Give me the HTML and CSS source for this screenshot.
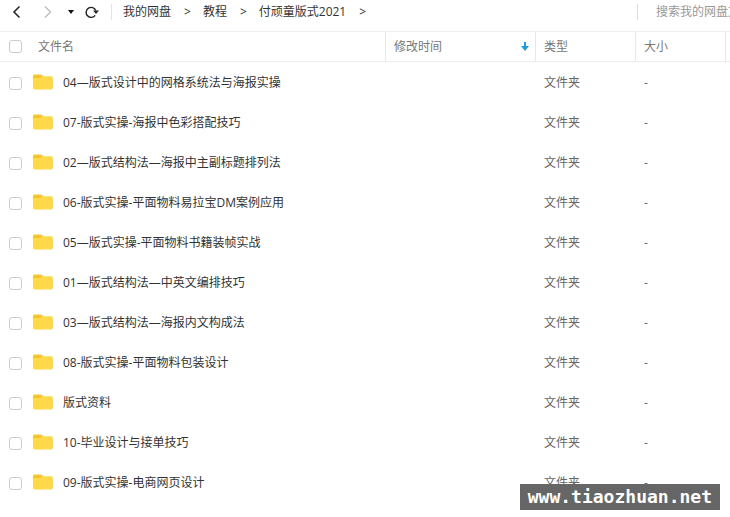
FILE: index.html
```html
<!DOCTYPE html>
<html lang="zh-CN">

<head>
    <meta charset="UTF-8">
    <meta name="viewport" content="width=device-width, initial-scale=1.0">
    <title>我的网盘</title>
    <link rel="stylesheet" href="styles.css">
</head>

<body>
    <svg class="symbols" aria-hidden="true">
        <symbol id="folder" viewBox="0 0 20 16">
            <path fill="#f2c530" d="M0 2.500C0 1.200.8.5 2 .5h5.500c1 0 1.500.3 2 1L11.500 4v4H0z" />
            <path fill="#ffd94a" d="M0 5.500C0 4.300.6 4 1.500 4H6c1.500 0 2-.4 3-1.200.6-.4 1-.5 1.600-.5H18c1.300 0 2 .7 2 2v9.200c0 1.300-.7 2-2 2H2c-1.300 0-2-.7-2-2z" />
        </symbol>
    </svg>
    <header class="toolbar">
        <div class="nav-buttons">
            <button type="button" class="back" aria-label="后退">
                <svg width="8" height="12" viewBox="0 0 8 12"><path d="M7.500 .5L2 6l5.500 5.500" fill="none" stroke="#222" stroke-width="1.500" /></svg>
            </button>
            <button type="button" class="forward" aria-label="前进">
                <svg width="8" height="12" viewBox="0 0 8 12"><path d="M1 .5L6.500 6 1 11.500" fill="none" stroke="#bbb" stroke-width="1.300" /></svg>
            </button>
            <button type="button" class="history" aria-label="历史记录">
                <svg width="6" height="4" viewBox="0 0 6 4"><path d="M0 0h6L3 4z" fill="#111" /></svg>
            </button>
            <button type="button" class="refresh" aria-label="刷新">
                <svg width="14" height="12" viewBox="0 0 14 12"><path d="M10.200 9.300A5 5 0 1 1 10.800 4.500" fill="none" stroke="#222" stroke-width="1.400" /><path d="M8 4.500h6L11 8z" fill="#222" /></svg>
            </button>
        </div>
        <nav class="breadcrumb">
            <a href="#">我的网盘</a><span>&gt;</span>
            <a href="#">教程</a><span>&gt;</span>
            <a href="#">付顽童版式2021</a><span>&gt;</span>
        </nav>
        <input class="search" type="text" placeholder="搜索我的网盘文件" aria-label="搜索我的网盘文件">
    </header>
    <table class="files">
        <thead>
            <tr>
                <th class="col-name">
                    <div class="name-cell">
                        <input type="checkbox" aria-label="全选">
                        <span>文件名</span>
                    </div>
                </th>
                <th class="col-time">
                    <button type="button" class="sort">
                        修改时间
                        <svg width="8" height="9" viewBox="0 0 8 9"><path d="M3 0h2v4h3L4 9 0 4h3z" fill="#1a9fdc" /></svg>
                    </button>
                </th>
                <th class="col-type">类型</th>
                <th class="col-size">大小</th>
                <th class="col-end"></th>
            </tr>
        </thead>
        <tbody>
            <tr>
                <td>
                    <div class="name-cell">
                        <input type="checkbox" id="f1">
                        <svg class="folder"><use href="#folder" /></svg>
                        <label for="f1">04—版式设计中的网格系统法与海报实操</label>
                    </div>
                </td>
                <td></td>
                <td>文件夹</td>
                <td>-</td>
                <td></td>
            </tr>
            <tr>
                <td>
                    <div class="name-cell">
                        <input type="checkbox" id="f2">
                        <svg class="folder"><use href="#folder" /></svg>
                        <label for="f2">07-版式实操-海报中色彩搭配技巧</label>
                    </div>
                </td>
                <td></td>
                <td>文件夹</td>
                <td>-</td>
                <td></td>
            </tr>
            <tr>
                <td>
                    <div class="name-cell">
                        <input type="checkbox" id="f3">
                        <svg class="folder"><use href="#folder" /></svg>
                        <label for="f3">02—版式结构法—海报中主副标题排列法</label>
                    </div>
                </td>
                <td></td>
                <td>文件夹</td>
                <td>-</td>
                <td></td>
            </tr>
            <tr>
                <td>
                    <div class="name-cell">
                        <input type="checkbox" id="f4">
                        <svg class="folder"><use href="#folder" /></svg>
                        <label for="f4">06-版式实操-平面物料易拉宝DM案例应用</label>
                    </div>
                </td>
                <td></td>
                <td>文件夹</td>
                <td>-</td>
                <td></td>
            </tr>
            <tr>
                <td>
                    <div class="name-cell">
                        <input type="checkbox" id="f5">
                        <svg class="folder"><use href="#folder" /></svg>
                        <label for="f5">05—版式实操-平面物料书籍装帧实战</label>
                    </div>
                </td>
                <td></td>
                <td>文件夹</td>
                <td>-</td>
                <td></td>
            </tr>
            <tr>
                <td>
                    <div class="name-cell">
                        <input type="checkbox" id="f6">
                        <svg class="folder"><use href="#folder" /></svg>
                        <label for="f6">01—版式结构法—中英文编排技巧</label>
                    </div>
                </td>
                <td></td>
                <td>文件夹</td>
                <td>-</td>
                <td></td>
            </tr>
            <tr>
                <td>
                    <div class="name-cell">
                        <input type="checkbox" id="f7">
                        <svg class="folder"><use href="#folder" /></svg>
                        <label for="f7">03—版式结构法—海报内文构成法</label>
                    </div>
                </td>
                <td></td>
                <td>文件夹</td>
                <td>-</td>
                <td></td>
            </tr>
            <tr>
                <td>
                    <div class="name-cell">
                        <input type="checkbox" id="f8">
                        <svg class="folder"><use href="#folder" /></svg>
                        <label for="f8">08-版式实操-平面物料包装设计</label>
                    </div>
                </td>
                <td></td>
                <td>文件夹</td>
                <td>-</td>
                <td></td>
            </tr>
            <tr>
                <td>
                    <div class="name-cell">
                        <input type="checkbox" id="f9">
                        <svg class="folder"><use href="#folder" /></svg>
                        <label for="f9">版式资料</label>
                    </div>
                </td>
                <td></td>
                <td>文件夹</td>
                <td>-</td>
                <td></td>
            </tr>
            <tr>
                <td>
                    <div class="name-cell">
                        <input type="checkbox" id="f10">
                        <svg class="folder"><use href="#folder" /></svg>
                        <label for="f10">10-毕业设计与接单技巧</label>
                    </div>
                </td>
                <td></td>
                <td>文件夹</td>
                <td>-</td>
                <td></td>
            </tr>
            <tr>
                <td>
                    <div class="name-cell">
                        <input type="checkbox" id="f11">
                        <svg class="folder"><use href="#folder" /></svg>
                        <label for="f11">09-版式实操-电商网页设计</label>
                    </div>
                </td>
                <td></td>
                <td>文件夹</td>
                <td>-</td>
                <td></td>
            </tr>
        </tbody>
    </table>
    <div class="watermark">www.tiaozhuan.net</div>
</body>

</html>
```
FILE: styles.css
```css
* {
    box-sizing: border-box;
}

body {
    margin: 0;
    background: #fff;
    color: #333;
    font-family: "Open Sans", "Noto Sans CJK SC", sans-serif;
    font-size: 12px;
    line-height: 16px;
}

button,
input {
    font: inherit;
    color: inherit;
}

button {
    display: flex;
    align-items: center;
    padding: 0;
    border: none;
    background: none;
    cursor: pointer;
}

a {
    color: #333;
    text-decoration: none;
}

.symbols {
    display: none;
}

/* toolbar */
.toolbar {
    display: flex;
    align-items: center;
    height: 31px;
    padding-bottom: 7px;
}

.nav-buttons {
    display: flex;
    align-items: center;
    height: 16px;
    padding: 0 12px;
    border-right: 1px solid #e4e4e4;
}

.forward {
    margin-left: 24px;
}

.history {
    margin-left: 16px;
}

.refresh {
    margin-left: 11px;
}

.breadcrumb {
    display: flex;
    flex: 1;
    gap: 12px;
    padding-left: 11px;
    white-space: nowrap;
}

.breadcrumb span {
    padding-left: 1px;
}

.search {
    width: 93px;
    height: 16px;
    padding: 0 0 0 18px;
    border: none;
    border-left: 1px solid #ddd;
    outline: none;
    background: none;
}

.search::placeholder {
    color: #999;
}

/* file list */
.files {
    width: 100%;
    table-layout: fixed;
    border-collapse: separate;
    border-spacing: 0;
}

.files th {
    height: 31px;
    padding: 0 8px;
    border-top: 1px solid #eee;
    border-bottom: 1px solid #eee;
    border-right: 1px solid #e8e8e8;
    color: #777;
    font-weight: normal;
    text-align: left;
}

.files td {
    height: 40px;
    padding: 2px 8px 0;
    color: #666;
}

.files .col-time {
    width: 150px;
    padding-right: 6px;
}

.col-type {
    width: 100px;
}

.col-size {
    width: 90px;
}

.files .col-end {
    width: 4px;
    padding: 0;
    border-right: none;
}

.sort {
    justify-content: space-between;
    width: 100%;
}

.name-cell {
    display: flex;
    align-items: center;
    white-space: nowrap;
}

.name-cell label {
    color: #333;
}

.name-cell input {
    appearance: none;
    width: 13px;
    height: 13px;
    margin: 0 0 0 1px;
    border: 1px solid #ccc;
    border-radius: 3px;
    background: #fff;
}

.name-cell input:checked {
    background: #1a9fdc;
}

.name-cell span {
    margin-left: 16px;
}

.folder {
    width: 20px;
    height: 16px;
    margin: 0 10px 2px 11px;
}

.watermark {
    position: absolute;
    right: 10px;
    bottom: 7px;
    padding: 0 8px;
    background: #666;
    color: #fff;
    font: bold 18px/26px "DejaVu Sans Mono", monospace;
}
```
